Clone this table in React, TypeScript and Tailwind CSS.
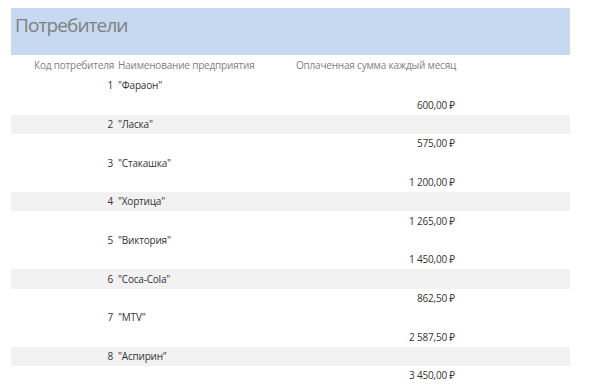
const rows = [
  { id: 1, name: "\"Фараон\"", sum: "600,00 ₽" },
  { id: 2, name: "\"Ласка\"", sum: "575,00 ₽" },
  { id: 3, name: "\"Стакашка\"", sum: "1 200,00 ₽" },
  { id: 4, name: "\"Хортица\"", sum: "1 265,00 ₽" },
  { id: 5, name: "\"Виктория\"", sum: "1 450,00 ₽" },
  { id: 6, name: "\"Coca-Cola\"", sum: "862,50 ₽" },
  { id: 7, name: "\"MTV\"", sum: "2 587,50 ₽" },
  { id: 8, name: "\"Аспирин\"", sum: "3 450,00 ₽" },
];

export default function App() {
  return (
    <div
      className="w-[600px] h-[386px] overflow-hidden bg-white pt-[8px]"
      style={{ fontFamily: '"Open Sans", "Noto Sans", sans-serif' }}
    >
      {/* Report header */}
      <div className="ml-[11px] w-[559px] h-[47px] bg-[#c6d9f0] pl-[4px] pt-[4px]">
        <h1 className="text-[19px] leading-[26px] text-[#7f7f7f] tracking-[-0.9px]">Потребители</h1>
      </div>

      {/* Column headers */}
      <div className="flex items-center h-[21px] text-[10px] text-[#7f7f7f] tracking-[-0.2px]">
        <div className="w-[114px] text-right">Код потребителя</div>
        <div className="w-[182px] pl-[4px]">Наименование предприятия</div>
        <div>Оплаченная сумма каждый месяц</div>
      </div>

      {/* Records */}
      {rows.map((r) => (
        <div key={r.id} className="h-[38.7px] flex flex-col text-[10px] text-[#333333] tracking-[-0.2px]">
          <div
            className={`ml-[11px] w-[559px] flex-1 flex items-center ${
              r.id % 2 === 0 ? "bg-[#f2f2f2]" : ""
            }`}
          >
            <div className="w-[102px] text-right">{r.id}</div>
            <div className="pl-[5px]">{r.name}</div>
          </div>
          <div className="flex-1 flex items-center">
            <div className="w-[455px] text-right">{r.sum}</div>
          </div>
        </div>
      ))}
    </div>
  );
}
